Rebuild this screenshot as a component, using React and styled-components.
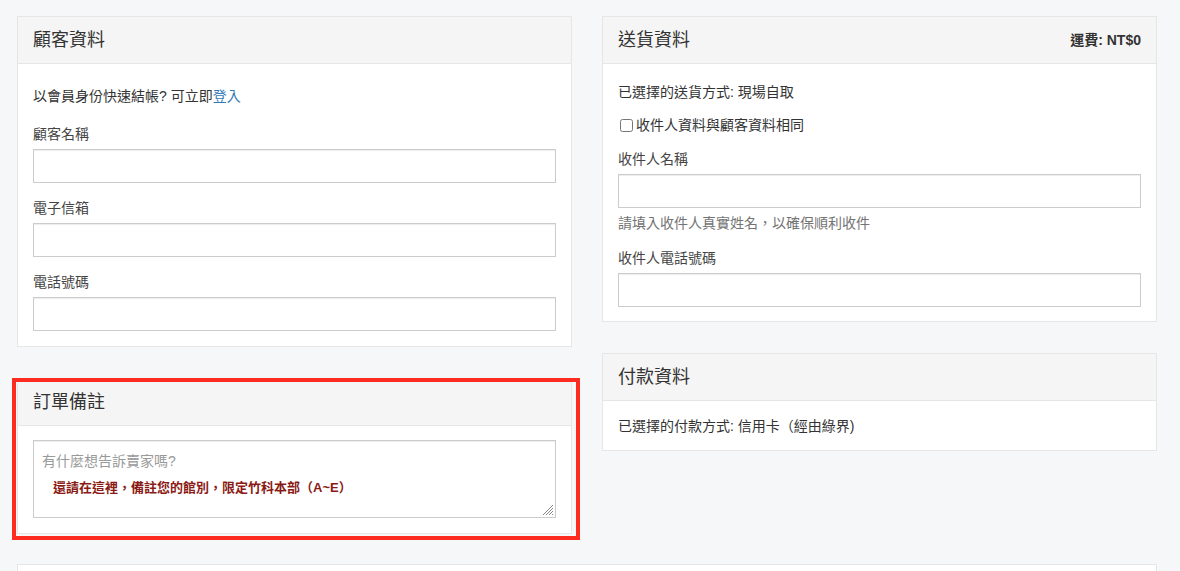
import React from 'react'
import styled, { createGlobalStyle } from 'styled-components'

const GlobalStyle = createGlobalStyle`
  html, body {
    margin: 0;
    padding: 0;
    background: #f6f7f9;
  }
  body {
    font-family: "Liberation Sans", "Noto Sans CJK TC", sans-serif;
    font-size: 14px;
    line-height: 20px;
    color: #333;
  }
  * {
    box-sizing: border-box;
  }
`;

const Page = styled.div`
  width: 1180px;
  height: 571px;
  overflow: hidden;
  padding: 16px 23px 0 17px;
`;

const Columns = styled.div`
  display: grid;
  grid-template-columns: 555px 555px;
  column-gap: 30px;
  align-items: start;
`;

const Column = styled.div`
  display: flex;
  flex-direction: column;
  gap: ${props => props.gap || 31}px;
`;

const Panel = styled.div`
  position: relative;
  background: #fff;
  border: 1px solid #e6e6e6;
`;

const Highlight = styled.div`
  position: absolute;
  top: -1px;
  left: -6px;
  right: -9px;
  bottom: -7px;
  border: 4px solid #fd2b20;
  pointer-events: none;
`;

const PanelHeader = styled.div`
  height: 47px;
  background: #f5f5f5;
  border-bottom: 1px solid #e6e6e6;
  padding: 0 15px;
  display: flex;
  align-items: center;
  justify-content: space-between;
`;

const PanelTitle = styled.div`
  font-size: 18px;
  color: #333;
`;

const Fee = styled.div`
  font-size: 14px;
  font-weight: bold;
  color: #333;
`;

const PanelBody = styled.div`
  padding: ${props => props.pad || '15px 15px 14px'};
`;

const Line = styled.div`
  margin-top: ${props => props.mt || 0}px;
  color: ${props => props.muted ? '#737373' : '#333'};
`;

const Link = styled.a`
  color: #337ab7;
  text-decoration: none;
`;

const Label = styled.div`
  margin-top: ${props => props.mt || 15}px;
  margin-bottom: 5px;
  color: #444;
`;

const Input = styled.input`
  display: block;
  width: 100%;
  height: 34px;
  border: 1px solid #ccc;
  box-shadow: inset 0 1px 1px rgba(0, 0, 0, 0.075);
  background: #fff;
  padding: 6px 8px;
  font: inherit;
  outline: none;
`;

const CheckRow = styled.label`
  display: flex;
  align-items: center;
  gap: 3px;
  margin-top: 13px;
  color: #333;
`;

const Check = styled.input`
  width: 13px;
  height: 13px;
  margin: 0 0 0 2px;
`;

const NoteBox = styled.div`
  position: relative;
  height: 78px;
  border: 1px solid #ccc;
  box-shadow: inset 0 1px 1px rgba(0, 0, 0, 0.075);
  padding: 10px 8px;
`;

const Placeholder = styled.div`
  color: #999;
`;

const RedNote = styled.div`
  margin: 7px 0 0 11px;
  font-size: 13px;
  font-weight: bold;
  color: #8a1a14;
`;

const Grip = styled.svg`
  position: absolute;
  right: 1px;
  bottom: 1px;
`;

const Footer = styled.div`
  margin-top: 30px;
  height: 40px;
  background: #fff;
  border: 1px solid #e6e6e6;
  width: 1140px;
`;

export default function App() {
  return (
    <Page>
      <GlobalStyle />
      <Columns>
        <Column gap={31}>
          <Panel>
            <PanelHeader>
              <PanelTitle>顧客資料</PanelTitle>
            </PanelHeader>
            <PanelBody pad="22px 15px 15px">
              <Line>以會員身份快速結帳? 可立即<Link href="#">登入</Link></Line>
              <Label mt={18}>顧客名稱</Label>
              <Input />
              <Label>電子信箱</Label>
              <Input />
              <Label>電話號碼</Label>
              <Input />
            </PanelBody>
          </Panel>
          <Panel>
            <Highlight />
            <PanelHeader>
              <PanelTitle>訂單備註</PanelTitle>
            </PanelHeader>
            <PanelBody pad="14px 15px 15px">
              <NoteBox>
                <Placeholder>有什麼想告訴賣家嗎?</Placeholder>
                <RedNote>還請在這裡，備註您的館別，限定竹科本部（A~E）</RedNote>
                <Grip width="12" height="12" viewBox="0 0 12 12">
                  <g stroke="#888" strokeWidth="1">
                    <line x1="11" y1="1" x2="1" y2="11" />
                    <line x1="11" y1="4" x2="4" y2="11" />
                    <line x1="11" y1="7" x2="7" y2="11" />
                    <line x1="11" y1="10" x2="10" y2="11" />
                  </g>
                </Grip>
              </NoteBox>
            </PanelBody>
          </Panel>
        </Column>
        <Column gap={31}>
          <Panel>
            <PanelHeader>
              <PanelTitle>送貨資料</PanelTitle>
              <Fee>運費: NT$0</Fee>
            </PanelHeader>
            <PanelBody pad="18px 15px 14px">
              <Line>已選擇的送貨方式: 現場自取</Line>
              <CheckRow>
                <Check type="checkbox" />
                收件人資料與顧客資料相同
              </CheckRow>
              <Label mt={14}>收件人名稱</Label>
              <Input />
              <Line muted mt={5}>請填入收件人真實姓名，以確保順利收件</Line>
              <Label>收件人電話號碼</Label>
              <Input />
            </PanelBody>
          </Panel>
          <Panel>
            <PanelHeader>
              <PanelTitle>付款資料</PanelTitle>
            </PanelHeader>
            <PanelBody>
              <Line>已選擇的付款方式: 信用卡（經由綠界)</Line>
            </PanelBody>
          </Panel>
        </Column>
      </Columns>
      <Footer />
    </Page>
  )
}
